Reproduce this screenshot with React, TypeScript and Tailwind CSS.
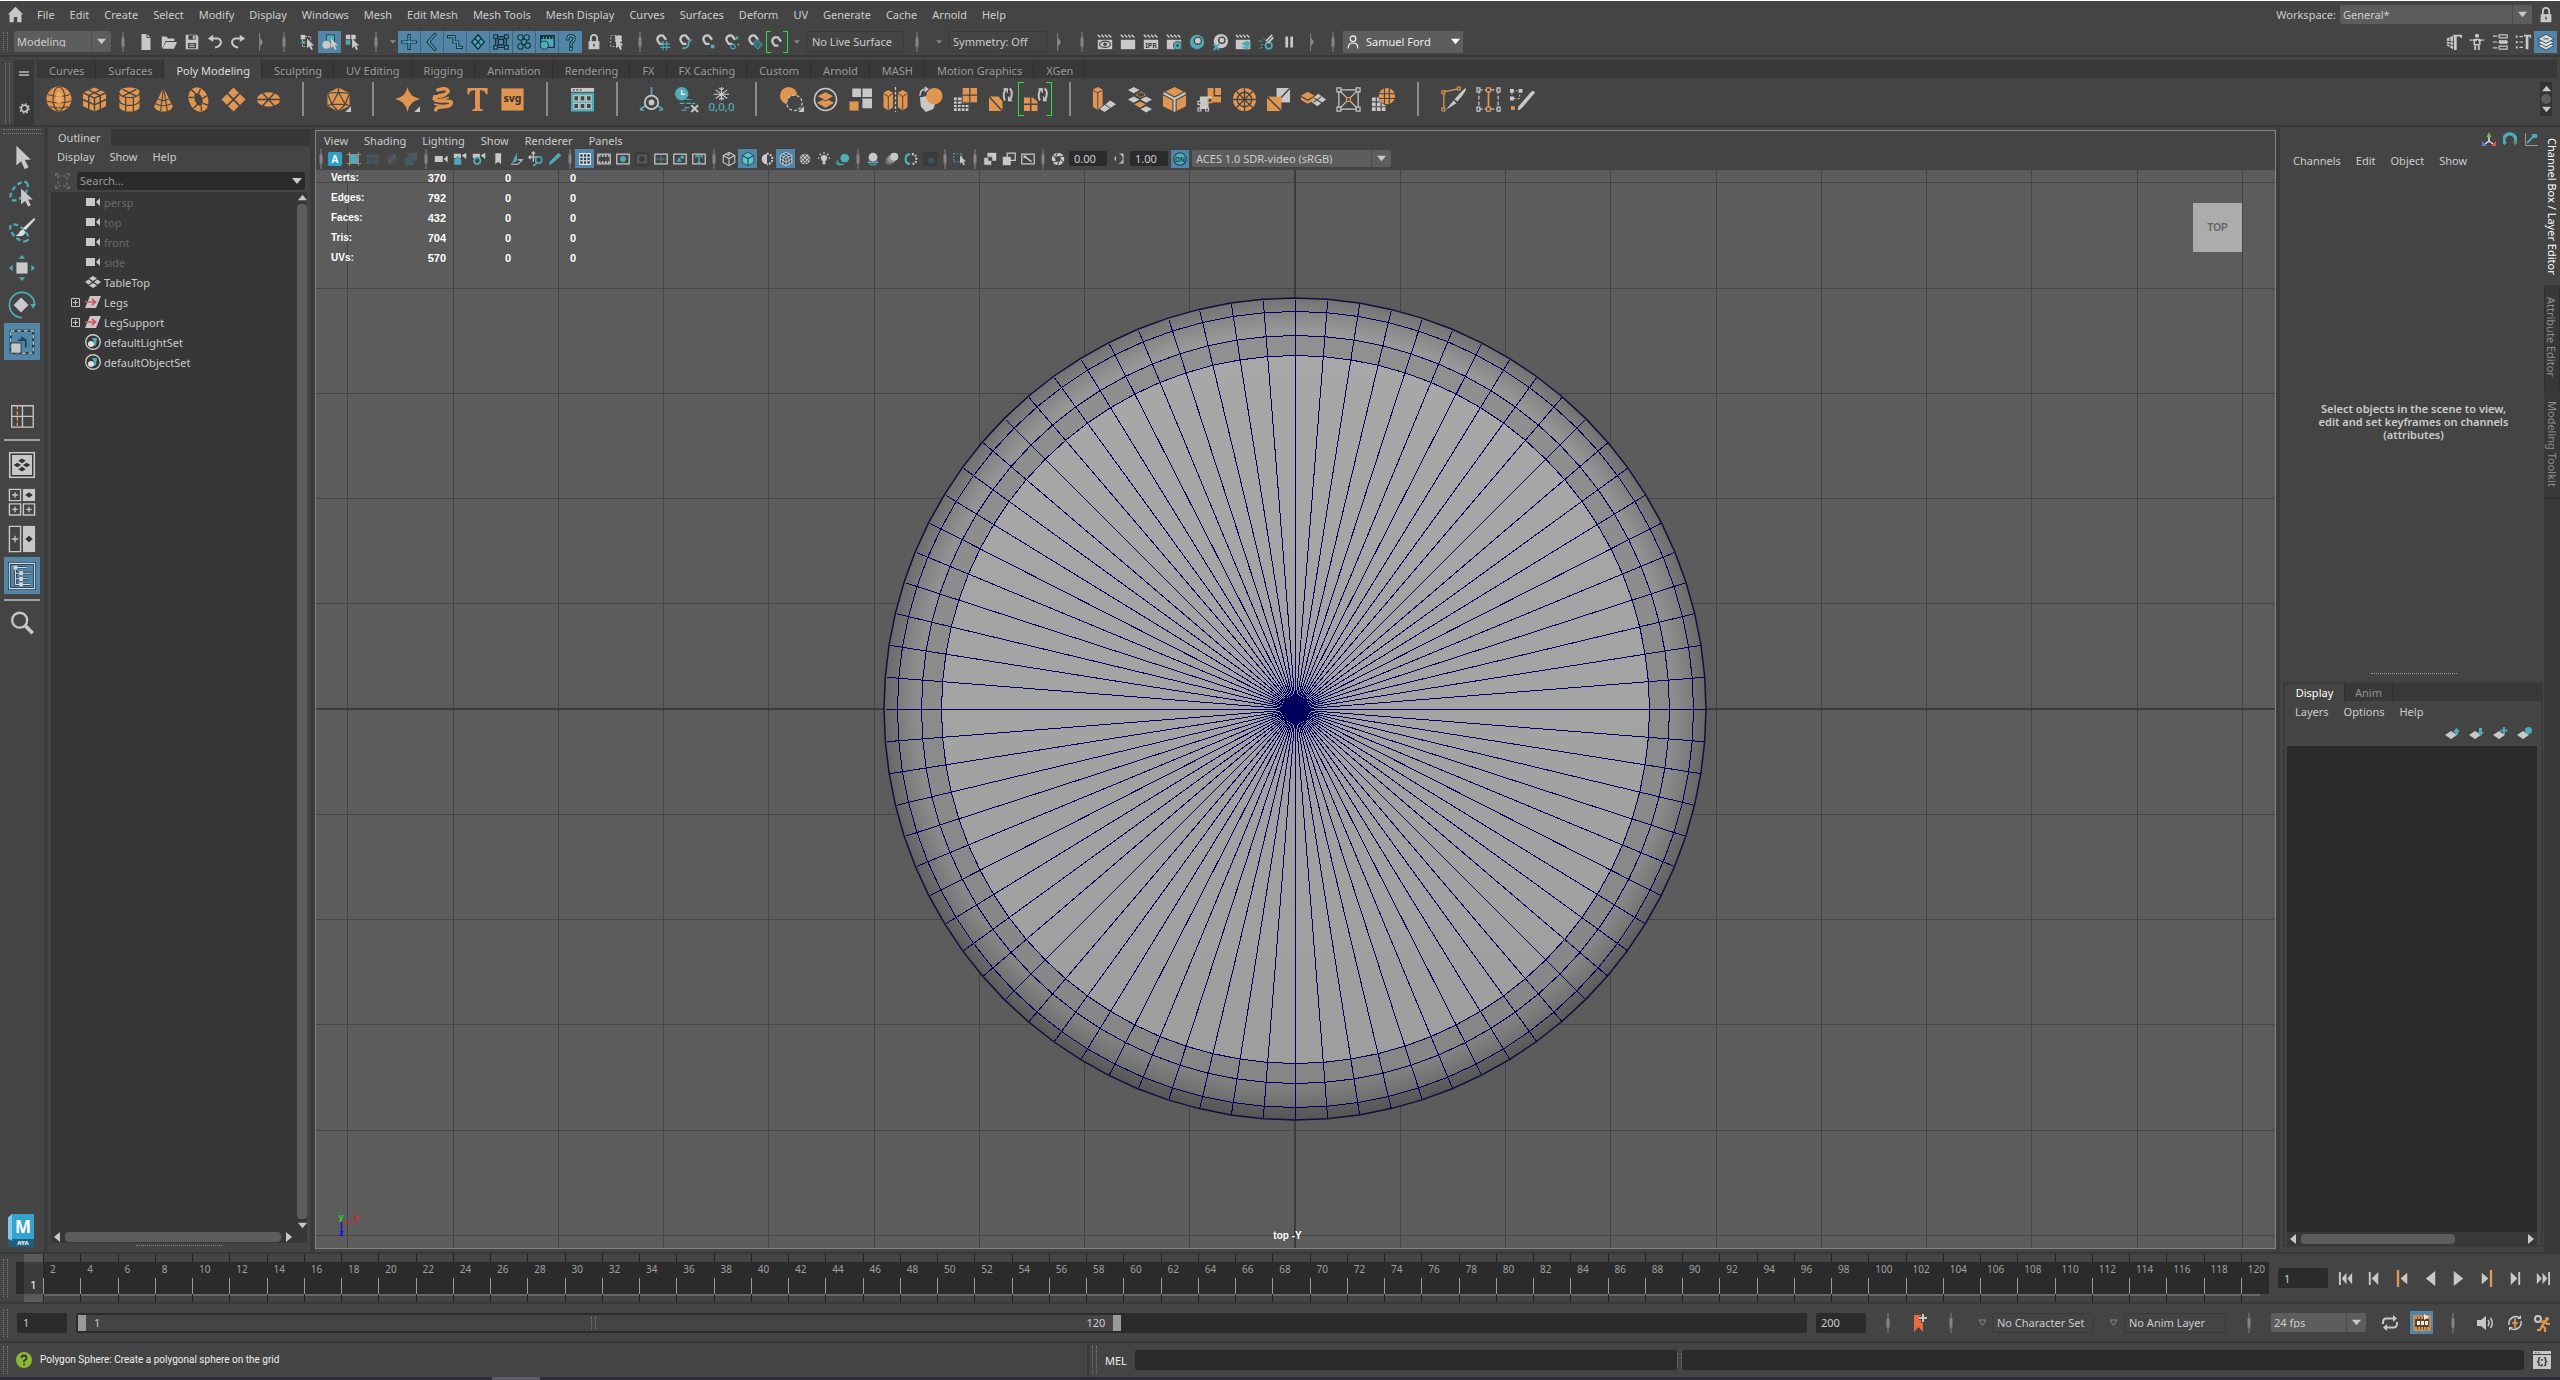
import React from "react";

const O = "#e09650";
const T = "#4dacb8";
const G = "#c8c8c8";
const D = "#444444";
const K = "#2b2b2b";

type IconMap = Record<string, React.ReactNode>;

/* ---------- shelf icons, 26 x 26 ---------- */
const swap = (
  <g fill="none" stroke={G} strokeWidth="2">
    <path d="M19 2c-3 2-3.500 8-1.500 12M22.500 1.500c3 2 3 8.500 0 12" />
    <path d="M16 2h4v4M25 14h-3.500v-4" strokeWidth="1.500" />
  </g>
);
const shelfIcons: IconMap = {
  sphere: (
    <g>
      <circle cx="13" cy="13" r="12.500" fill={O} />
      <g fill="none" stroke="#5a4632" strokeWidth="1.200">
        <ellipse cx="13" cy="13" rx="6" ry="12" />
        <path d="M2 8.500q11 4 22 0M1 15q12 4 24 0M4 20.500q9 3 18 0" />
      </g>
      <ellipse cx="13" cy="12" rx="3.500" ry="6" fill="#f4b57c" opacity=".7" />
    </g>
  ),
  cube: (
    <g>
      <path d="M13 .5 25 6v14l-12 5.500L1 20V6z" fill={O} />
      <path d="M1 6l12 5.500L25 6M13 11.500v14M7 3.200l12 5.500v14M19 3.200 7 8.700v14M1 13l12 5.500L25 13" fill="none" stroke={D} strokeWidth="1.500" />
    </g>
  ),
  cylinder: (
    <g>
      <path d="M2.500 5.500C2.500 2.500 7 .5 13 .5s10.500 2 10.500 5v15c0 3-4.500 5-10.500 5s-10.500-2-10.500-5z" fill={O} />
      <path d="M2.500 6c0 3 4.500 5 10.500 5s10.500-2 10.500-5M9 11v14M17 11v14M2.500 14c0 3 4.500 5 10.500 5s10.500-2 10.500-5M6 2.500l14 7M20 2.500l-14 7" fill="none" stroke={D} strokeWidth="1.300" />
    </g>
  ),
  cone: (
    <g>
      <path d="M13 .5 22.500 20c0 3-4 5.500-9.500 5.500S3.500 23 3.500 20z" fill={O} />
      <path d="M13 .5 10 25M13 .5 17 25M7.500 12.500q5.500 3.500 11 0M5 17.500q8 4 16 0" fill="none" stroke={D} strokeWidth="1.200" />
    </g>
  ),
  torus: (
    <g>
      <ellipse cx="13" cy="13" rx="7" ry="10" fill="none" stroke={O} strokeWidth="6" transform="rotate(-22 13 13)" />
      <path d="M5 2l5 5M15 2l-2 5M22 9l-5 3M23 19l-5-2M3 11l5 0M8 22l4-4M16 25l0-5" stroke={D} strokeWidth="1.500" />
    </g>
  ),
  plane: (
    <g>
      <path d="M13 .5 25.500 13 13 25.500.5 13z" fill={O} />
      <path d="M6.700 6.700l12.600 12.600M19.300 6.700 6.700 19.300" stroke={D} strokeWidth="1.800" />
    </g>
  ),
  disc: (
    <g>
      <ellipse cx="13" cy="13" rx="12" ry="7.500" fill={O} />
      <path d="M1 13h24M7 6.500l12 13M19 6.500 7 19.500" stroke={D} strokeWidth="1.500" />
    </g>
  ),
  platonic: (
    <g>
      <path d="M13 .5 24.500 6.500v13L13 25.500 1.500 19.500v-13z" fill={O} />
      <path d="M13 5.500 20 18H6zM13 .5v5M1.500 6.500 13 5.500l11.500 1M6 18 1.500 6.500M6 18l7 7.500L20 18l4.500-11.500M1.500 19.500 6 18M24.500 19.500 20 18" fill="none" stroke={D} strokeWidth="1.300" />
      <path d="M26 20v6h-6z" fill={G} />
    </g>
  ),
  star: (
    <g>
      <path d="M13 0q1.500 10 13 12.500Q14.500 15 13 26q-1.500-11-13-13.500Q11.500 10 13 0z" fill={O} />
      <path d="M26 20v6h-6z" fill={G} />
    </g>
  ),
  helix: (
    <g fill="none" strokeLinecap="round">
      <path d="M8 3q12-3 10 2T5 10q-3 5 8 4.500T22 17q0 3.500-8 3.500T6 24" stroke={O} strokeWidth="3.600" />
      <path d="M19 3q4 4-10 5M5 11q2 4 14 0M22 17q-4 4-17 1" stroke={O} strokeWidth="1.600" />
    </g>
  ),
  type: <path d="M2.500 1h21v6.500h-1.800q-.7-4-4.700-4h-1.500V21q0 2.300 3 2.500V25h-11v-1.500q3-.2 3-2.500V3.500H9q-4 0-4.700 4H2.500z" fill={O} />,
  svg: (
    <g>
      <rect x="1.500" y="1.500" width="23" height="23" fill={O} />
      <text x="13" y="16" textAnchor="middle" fontSize="11" fontWeight="700" fontFamily="Noto Sans, sans-serif" fill="#33302c">svg</text>
    </g>
  ),
  sheet: (
    <g>
      <rect x="1" y="1" width="24" height="4" fill={G} />
      <path d="M3 3h2M6.500 3h2M10 3h2" stroke={D} strokeWidth="1.500" />
      <rect x="1" y="6" width="24" height="19.500" fill={T} />
      <g fill={D} stroke={G} strokeWidth="1.200">
        <rect x="4" y="9" width="5" height="5.500" /><rect x="10.500" y="9" width="5" height="5.500" /><rect x="17" y="9" width="5" height="5.500" />
        <rect x="4" y="17" width="5" height="5.500" /><rect x="10.500" y="17" width="5" height="5.500" /><rect x="17" y="17" width="5" height="5.500" />
      </g>
    </g>
  ),
  pivot: (
    <g fill="none" strokeWidth="1.800">
      <path d="M13 0v9M8 19l-7 4M18 19l7 4M1 23l4 1.500M25 23l-4 1.500" stroke={T} />
      <circle cx="13" cy="16" r="7" stroke={G} />
      <circle cx="13" cy="16" r="3" fill={G} />
    </g>
  ),
  clock: (
    <g>
      <circle cx="8" cy="7" r="7" fill={T} />
      <path d="M8 3v4.500h4" fill="none" stroke="#e8e8e8" strokeWidth="1.600" />
      <path d="M12 13h7M13 17h9M6 17h5M11 21.500h5M8 24h5" stroke={T} strokeWidth="1.200" strokeDasharray="5 1" />
      <path d="M18 19l7 7M25 19l-7 7" stroke={G} strokeWidth="2" />
    </g>
  ),
  freeze: (
    <g>
      <path d="M13 0v14M7 3l12 9M19 3 7 12M5 7.500h16M10.500 1 13 3l2.500-2M10.500 13l2.500-2 2.500 2" fill="none" stroke={G} strokeWidth="1.200" />
      <text x="13" y="25" textAnchor="middle" fontSize="12" fontFamily="Noto Sans, sans-serif" fontWeight="500" fill={T}>0,0,0</text>
    </g>
  ),
  booleans: (
    <g>
      <circle cx="10" cy="9" r="9" fill={O} />
      <circle cx="16" cy="16.500" r="8" fill={D} stroke={G} strokeWidth="1.300" strokeDasharray="3 2" />
      <path d="M26 20v6h-6z" fill={G} />
    </g>
  ),
  combine: (
    <g>
      <circle cx="13" cy="13" r="11.500" fill="none" stroke={G} strokeWidth="1.600" />
      <path d="M13 12l9 4.500-9 5-9-5z" fill={O} /><path d="M13 5l9 4.500-9 5-9-5z" fill={O} stroke={D} />
    </g>
  ),
  separate: (
    <g>
      <path d="M4.500 1.500h9v9h-9zM15 1.500h10v9H15zM15 12h10v10H15z" fill={G} /><path d="M1.500 15h9.500v9.500H1.500z" fill={O} />
    </g>
  ),
  mirror: (
    <g>
      <path d="M5.500 3 10.500 6v15l-5 3.500L.5 21V6zM20.500 3l5 3v15l-5 3.500-5-3.500V6z" fill={O} />
      <path d="M.5 6.500 5.500 10l5-3.500M5.500 10v14M15.500 6.500l5 3.500 5-3.500M20.500 10v14" fill="none" stroke={D} />
      <path d="M13 0v26" stroke={G} strokeWidth="1.300" strokeDasharray="3 2" />
    </g>
  ),
  smooth: (
    <g>
      <path d="M2 11l8-2 9 5-3 9-8 3-5-6z" fill={G} /><circle cx="17" cy="9.500" r="8.500" fill={O} />
      <path d="M2 9q0-7 7-7M7 0l3 2-3 3" fill="none" stroke={G} strokeWidth="1.500" />
    </g>
  ),
  remesh: (
    <g>
      <path d="M10 1h15v15H10z" fill={O} /><path d="M17.500 1v15M10 8.500h15" stroke={D} strokeWidth="1.300" />
      <path d="M1 11h8v6.500h7V25H1z" fill={G} /><path d="M4.500 11v14M8.500 17v8M12.500 17v8M1 14.500h8M1 18h15M1 21.500h15" stroke={D} strokeWidth="1.200" />
    </g>
  ),
  retopo: (
    <g>
      <path d="M1 10h10l4 5v10H1z" fill={O} /><path d="M1 10l14 15" stroke={D} strokeWidth="1.500" />{swap}
    </g>
  ),
  quadMesh: (
    <g>
      <path d="M1 11h9l5 4v10H1z" fill={O} /><path d="M8 11v14M1 18h14" stroke={D} strokeWidth="1.500" />{swap}
    </g>
  ),
  extrude: (
    <g>
      <path d="M6 0l5 2.500v18L6 24l-5-3.500v-18z" fill={O} /><path d="M1 3.500 6 6l5-2.500M6 6v17" fill="none" stroke={D} />
      <path d="M19 14l6 4-12 8-6-4z" fill={G} /><path d="M13 18l6 4M16 16l-9 7" stroke={D} />
    </g>
  ),
  bridge: (
    <g>
      <path d="M7 0l6 3-6 3.500L1 3zM7 10l6 3-6 3.500L1 13zM20 10l6 3-6 3.500-6-3.500zM20 20l6 3-6 3.500-6-3.500z" fill={G} />
      <path d="M13.500 15l6 3-6 3.500-6-3.500z" fill={O} /><path d="M14.500 5l5 3-5 3-5-3z" fill="none" stroke={O} strokeDasharray="2 1" />
    </g>
  ),
  bevel: (
    <g>
      <path d="M13 0 25 6v14l-12 6L1 20V6z" fill={O} />
      <path d="M2 6.500l11 6 11-6M13 12.500V25" fill="none" stroke={D} strokeWidth="4.500" />
      <path d="M2 6.500l11 6 11-6M13 12.500V25" fill="none" stroke={G} strokeWidth="2.200" />
    </g>
  ),
  detach: (
    <g>
      <path d="M11 1h14v15H11z" fill={O} /><path d="M18 1v8h7" fill="none" stroke={D} strokeWidth="1.500" />
      <path d="M3 10h12v7h-3v6H3z" fill={G} />
      <g fill={D} stroke={G} strokeWidth="1.200"><path d="M1 15h3v3H1zM1 22h3v3H1zM9 22h3v3H9z" /><path d="M11.500 12h4v4h-4z" stroke={O} /></g>
    </g>
  ),
  wheel: (
    <g>
      <circle cx="13" cy="13" r="12" fill={O} />
      <path d="M13 1v24M1 13h24M4.500 4.500l17 17M21.500 4.500l-17 17" stroke={D} strokeWidth="1.400" /><circle cx="13" cy="13" r="7.500" fill="none" stroke={D} strokeWidth="1.400" />
    </g>
  ),
  triangulate: (
    <g>
      <path d="M11 1h14v15H11z" fill={G} /><path d="M25 1 11 16" stroke={D} strokeWidth="1.500" />
      <path d="M1 10h15v15H1z" fill={O} /><path d="M1 10l15 15" stroke={D} strokeWidth="1.500" />
    </g>
  ),
  patches: (
    <g>
      <path d="M18 7l8 6-9 7-8-6z" fill={G} /><path d="M13 11l9 6M21 10l-8 6" stroke={D} strokeWidth="1.200" />
      <path d="M7 5l7 4-7 4-7-4z" fill={O} /><path d="M0 10.500 7 14.500l7-4v3L7 17.500l-7-4z" fill={O} />
    </g>
  ),
  poke: (
    <g fill="none" strokeWidth="1.300">
      <path d="M3 3h20v20H3zM3 3l20 20M23 3 3 23" stroke={G} />
      <g fill={D} stroke={G}><path d="M1 1h4v4H1zM21 1h4v4h-4zM1 21h4v4H1zM21 21h4v4h-4z" /><path d="M11 11h4v4h-4z" stroke={O} /></g>
    </g>
  ),
  globe: (
    <g>
      <circle cx="16.500" cy="9.500" r="8.500" fill={O} /><path d="M8 7h17M8 12h17M14 1v17M19 1v17" stroke={D} strokeWidth="1.200" />
      <path d="M1 11h7q1 6 7 8v6H1z" fill={G} /><path d="M5.500 11v14M10.500 16v9M1 15.500h8M1 20.500h14" stroke={D} strokeWidth="1.200" />
    </g>
  ),
  cut: (
    <g>
      <path d="M3 23 3 5 18 2" fill="none" stroke={O} strokeWidth="1.300" />
      <g fill={D} stroke={O} strokeWidth="1.200"><path d="M1 4h3v3H1zM17 0h3v3h-3zM1 22h3v3H1z" /></g>
      <path d="M26 1q1 3-9 14l-3-2Q23 2 26 1zM13 14l3 3-11 7z" fill={G} />
    </g>
  ),
  edgeLoop: (
    <g fill="none" strokeWidth="1.300">
      <path d="M3 3h20M3 23h20M3 3v20M23 3v20" stroke={G} strokeDasharray="4 2" /><path d="M13 3v20" stroke={O} strokeWidth="1.800" />
      <g fill={D} stroke={G}><path d="M1 1h3v4H1zM22 1h3v4h-3zM1 21h3v4H1zM22 21h3v4h-3z" /><path d="M11 1h4v4h-4zM11 21h4v4h-4z" stroke={O} /></g>
    </g>
  ),
  quadDraw: (
    <g>
      <path d="M2 4h8v8H2z" fill="none" stroke={G} strokeDasharray="2 2" /><path d="M0 2h4v4H0zM9 2h4v4H9zM0 10h4v4H0z" fill={G} /><path d="M1 20h4v4H1z" fill={O} />
      <path d="M22 5q3-2 4 1L14 20l-4 4-2 0 1-4z" fill={G} />
    </g>
  ),
};

/* ---------- status line icons, 20 x 20 ---------- */
const cursor = (x: number, y: number, s = 1) => <path transform={`translate(${x} ${y}) scale(${s})`} d="M0 0v11l2.500-2.300 2 4.300 2-1-2-4H8z" fill={G} />;
const clap = (
  <g>
    <path d="M2 7.500h16V18H2z" fill={G} /><path d="M2 2l3 3M6 2l3 3M10 2l3 3M14 2l3 3" stroke={G} strokeWidth="1.700" />
  </g>
);
const magnet = <path d="M10.500 12 6.500 12Q3 8 4 5.500 6 1.500 10 3l3.500 4.500" fill="none" stroke={G} strokeWidth="2.600" />;
/* teal line with a dark casing, for the selection mask buttons */
const cased = (d: string) => (
  <g fill="none">
    <path d={d} stroke="#173140" strokeWidth="3.600" strokeLinecap="square" /><path d={d} stroke="#55b3bd" strokeWidth="1.400" strokeLinecap="square" />
  </g>
);
const smallIcons: IconMap = {
  file: <g><path d="M5 1h6l4 4v14H5z" fill={G} /><path d="M11 1v4h4" fill="none" stroke={D} /></g>,
  open: <g><path d="M2 4h5l2 2h7v3H6L4 15l-2 2z" fill={G} /><path d="M6.500 10H19l-3.500 7.500H3z" fill={G} /></g>,
  save: <g><path d="M3 2h12l2 2v14H3z" fill={G} /><path d="M6 2.500h8v5H6zM5.500 11h9v6h-9z" fill={D} /><path d="M11 3h2v4h-2z" fill={G} /><path d="M7 13h6M7 15h6" stroke={G} /></g>,
  undo: <g><path d="M6 6h7q4 1 3.500 5T10 16" fill="none" stroke={G} strokeWidth="2.200" /><path d="M2 6l6-4v8z" fill={G} /></g>,
  redo: <g><path d="M14 6H7q-4 1-3.500 5T10 16" fill="none" stroke={G} strokeWidth="2.200" /><path d="M18 6l-6-4v8z" fill={G} /></g>,
  end: <path d="M8 0h1v5l3 5-3 5v5H8z" fill="#8a8a8a" />,
  selHier: <g><path d="M3 2h5v5H3z" fill={G} /><path d="M8 4h6v4M5 7v8h3" fill="none" stroke={G} strokeDasharray="2 1" /><path d="M4 9h4v3H4z" fill={T} />{cursor(10, 6)}</g>,
  selObj: <g><path d="M6 2h9v8H6z" fill={T} stroke="#24424a" /><circle cx="6" cy="13" r="4.500" fill={G} />{cursor(11, 6)}</g>,
  selComp: <g><path d="M2 2h5v5H2zM8 2h5v5H8z" fill={G} /><path d="M2 8h5v5H2z" fill={T} />{cursor(9, 6)}</g>,
  mPlus: cased("M10 3v14M3 10h14"),
  mJoint: cased("M13 2 6 10l7 8"),
  mCurve: cased("M3 4h6v6h4v6h4"),
  mSurf: <path d="M10 2l7 8-7 8-7-8zM6.500 6l7 8M13.500 6l-7 8" fill={T} stroke="#173140" strokeWidth="1.500" />,
  mDeform: <g fill="none"><path d="M4 4h12v12H4zM7 7h6v6H7z" stroke="#173140" strokeWidth="1.600" /><path d="M2 2h4v4H2zM14 2h4v4h-4zM2 14h4v4H2zM14 14h4v4h-4z" fill={T} stroke="#173140" strokeWidth="1.400" /></g>,
  mDyn: <g fill="#4795a8" stroke="#173140" strokeWidth="1.200"><circle cx="6" cy="5" r="3" /><circle cx="13" cy="5" r="3" /><circle cx="10" cy="10" r="3" /><circle cx="6" cy="15" r="3" /><circle cx="14" cy="14" r="3" /></g>,
  mRend: <g><path d="M3 3h15v13H3z" fill={T} stroke="#173140" strokeWidth="1.500" /><path d="M3 5h15" stroke="#173140" strokeWidth="3.500" strokeDasharray="2.500 1" /><circle cx="7" cy="13.500" r="4.500" fill={T} stroke="#173140" /></g>,
  mMisc: <g>{cased("M6.500 6.500q0-3.500 3.500-3.500t3.500 3.500q0 2-2 3.200T10 13.500")}<path d="M8 15.500h4v4H8z" fill="#173140" /><path d="M9 16.500h2v2H9z" fill="#55b3bd" /></g>,
  lock: <g><path d="M4 9h12v9H4z" fill={G} /><path d="M6.500 9V6q0-4 3.500-4t3.500 4v3" fill="none" stroke={G} strokeWidth="2" /><path d="M9.200 12h1.600v3H9.200z" fill={D} /></g>,
  highlight: <g><path d="M3 3h12v12H3z" fill="none" stroke={G} strokeDasharray="2 2" /><path d="M8 3h7v7H8z" fill={G} />{cursor(9, 6)}</g>,
  snapGrid: <g>{magnet}<path d="M10 9v10M14 9v10M7 12h11M7 16h11" stroke={T} strokeWidth="1.300" /></g>,
  snapCurve: <g>{magnet}<path d="M6 17q8 0 7-7l3-3" fill="none" stroke={T} strokeWidth="2" /></g>,
  snapPoint: <g>{magnet}<path d="M12 13h4v4h-4z" fill={T} /></g>,
  snapProj: <g>{magnet}<circle cx="11" cy="15" r="2.500" fill="none" stroke={T} strokeWidth="1.300" /><path d="M14 4h3v3h-3zM16 12h2v2h-2z" fill={T} /></g>,
  snapPlane: <g>{magnet}<path d="M12 7l6 6-5 5-5-6z" fill="#326d76" stroke={T} /></g>,
  snapLive: <g transform="translate(1 2)">{magnet}</g>,
  rView: <g>{clap}<ellipse cx="10" cy="12.500" rx="6" ry="3.600" fill="none" stroke={D} strokeWidth="1.400" /><circle cx="10" cy="12.500" r="2" fill={D} /></g>,
  rFrame: clap,
  rIpr: <g>{clap}<text x="10" y="16.500" textAnchor="middle" fontSize="8" fontFamily="Noto Sans, sans-serif" fontWeight="600" fill={K}>IPR</text></g>,
  rSet: <g>{clap}<circle cx="14" cy="14" r="4.500" fill={T} stroke={D} /><circle cx="14" cy="14" r="1.500" fill={D} /></g>,
  rHyper: <g><circle cx="10" cy="10" r="8" fill={T} /><circle cx="11" cy="8.500" r="4" fill={G} stroke={D} strokeWidth="1.500" /></g>,
  rLook: <g><circle cx="11" cy="9" r="8" fill={G} /><circle cx="12" cy="8" r="3.500" fill={G} stroke={D} strokeWidth="1.500" /><path d="M3 12l6 7M9 12l-6 7" stroke={T} strokeWidth="2" /></g>,
  rLayers: <g>{clap}<path d="M14 9l5 3-5 3-5-3zM9 15l5 3 5-3" fill={T} stroke={T} /></g>,
  rLight: <g><circle cx="13" cy="14" r="3.500" fill="none" stroke={T} strokeWidth="2" /><path d="M10 9l7-7M12 11l6-6" stroke={G} strokeWidth="2" /><path d="M2 9h4M4 13h3M3 17l3-1M7 6l2 2" stroke={T} /></g>,
  pause: <path d="M6 4h3v12H6zM11.500 4h3v12h-3z" fill={G} />,
  user: <g fill="none" stroke="#e8e8e8" strokeWidth="1.600"><circle cx="10" cy="6" r="3.500" /><path d="M4 18q0-7 6-7t6 7" /></g>,
  home: <path d="M10 1 1 10h2v9h5v-6h4v6h5v-9h2z" fill={G} />,
  wModel: <g><path d="M2 6l7-3v15l-7-4z" fill={G} /><path d="M2 9l7 1M2 12l7 2M5.500 5v11" stroke={D} /><path d="M9 2h10v4l-3-2h-3v15h-3V5z" fill={G} /></g>,
  wHuman: <g><circle cx="10" cy="3" r="2.300" fill={G} /><path d="M2 8h16M7 8v4M13 8v4" stroke={G} strokeWidth="2" strokeDasharray="2 1" /><path d="M7 7h6v6H7z" fill="none" stroke={G} strokeWidth="1.500" /><path d="M8 14v5M12 14v5" stroke={G} strokeWidth="2" /></g>,
  wAttr: <g fill="none" stroke={G} strokeWidth="1.300"><path d="M9 2h9v3.500H9zM9 14.500h9V18H9zM2 3.500h5M2 10h5M2 16.500h5" /><path d="M9 8.500h9v3H9z" fill={G} strokeDasharray="2 1" /></g>,
  wTool: <g stroke={G}><path d="M2 4h2M2 10h2M2 16h2" strokeWidth="2.500" /><path d="M6 4h4M6 10h4M6 16h4" strokeWidth="1.200" /><path d="M11 2h8v4l-2-2h-1v14h-3V4h-2z" fill={G} stroke="none" /></g>,
  wLayers: <g fill="#dcdcdc" stroke="#27485c"><path d="M10 9l9 5-9 5-9-5z" /><path d="M10 5.500l9 5-9 5-9-5z" /><path d="M10 1.500l9 5-9 5-9-5z" /><path d="M7 6.500h6" /></g>,
};

/* ---------- viewport bar icons, 18 x 18 ---------- */
const box = <path d="M2 3.500h14v11H2z" fill="none" stroke={G} strokeWidth="1.400" />;
const panelIcons: IconMap = {
  a: <g><rect x="1" y="1" width="16" height="16" rx="2" fill="#2f9fc8" /><text x="9" y="13" textAnchor="middle" fontSize="11" fontWeight="700" fontFamily="Noto Sans, sans-serif" fill="#fff">A</text></g>,
  bake: <g><path d="M4 4h10v10H4z" fill={T} /><path d="M4 1v16M14 1v16M1 4h16M1 14h16" stroke="#9a8a80" strokeWidth="1.200" /></g>,
  dim1: <path d="M2 4h14v4H2zM2 9h6v6H2zM9 9h7v6H9z" fill="#47545c" />,
  dim2: <g><circle cx="9" cy="9" r="6" fill="#57494c" /><path d="M13 4 5 14" stroke="#47606a" strokeWidth="3" /></g>,
  dim3: <g><path d="M6 2h10v9H6z" fill="#4d5a60" /><path d="M2 7h10v9H2z" fill="#445a63" /></g>,
  cam: <g><path d="M2 5.500h9v7H2zM12 9l4.500-4v8z" fill={G} /></g>,
  camLock: <g><path d="M2 3h8v5H2zM11 5l5-3v7z" fill={G} /><path d="M3 9h7v6H3zM4.500 9q0-3 2-3t2 3" fill={T} stroke={T} /></g>,
  camSet: <g><path d="M2 3h8v5H2zM11 5l5-3v7z" fill={G} /><circle cx="7" cy="11" r="3.500" fill={D} stroke={T} strokeWidth="2" /></g>,
  bookmark: <path d="M6 2.500h6.500V15L9.200 12 6 15z" fill={G} />,
  plane2: <g><path d="M9 2v9l-6 3z" fill={T} /><path d="M2 15h8l5-5h-5" fill="none" stroke={G} strokeWidth="1.200" /></g>,
  panZoom: <g fill="none"><path d="M6 1v11M1 7h11M4 3l2-2 2 2M3 5 1 7l2 2" stroke={G} strokeWidth="1.400" /><circle cx="12" cy="10" r="3.500" fill={D} stroke={T} strokeWidth="1.700" /><path d="M10 13l-4 4" stroke={T} strokeWidth="2" /></g>,
  pencil: <path d="M13 2l3 3L6 14l-4 2 1-4z" fill={T} />,
  grid: <g><path d="M3 3h12v12H3z" fill="#2c4353" /><path d="M3 3h12v12H3zM3 7h12M3 11h12M7 3v12M11 3v12" fill="none" stroke="#dfe6ea" strokeWidth="1.300" /></g>,
  film: <g>{box}<path d="M3 5.500h12M3 12.500h12" stroke={G} strokeWidth="2" strokeDasharray="2 1.500" /></g>,
  gate: <g>{box}<circle cx="9" cy="9" r="3.300" fill={T} /></g>,
  dimGate: <g><path d="M1 1h16v16H1z" fill="#3c3c3c" /><path d="M3 4h12v10H3z" fill="#575757" /><circle cx="9" cy="9" r="3" fill="#3c3c3c" /></g>,
  chart: <g>{box}<path d="M2 9h14M9 3.500v11" stroke={T} strokeDasharray="2 1" /></g>,
  safe: <g>{box}<path d="M5 12l3-5 3 5z" fill={T} /><circle cx="11.500" cy="7" r="2" fill={T} /></g>,
  title: <g>{box}<path d="M5.500 5.500h7v2M5.500 5.500v2M9 5.500V13M7.500 13h3" fill="none" stroke={T} strokeWidth="1.600" /></g>,
  wire: <path d="M9 1.500 15.500 5v8L9 16.500 2.500 13V5zM2.500 5 9 8.500 15.500 5M9 8.500v8M5.500 3.500 9 5M9 1.500V5" fill="none" stroke={G} strokeWidth="1.200" />,
  shaded: <g><path d="M9 1.500 15.500 5v8L9 16.500 2.500 13V5z" fill="#5fc4ce" stroke="#1f4a58" /><path d="M2.500 5 9 8.500 15.500 5M9 8.500v8" fill="none" stroke="#1f4a58" strokeWidth="1.300" /></g>,
  halfMat: <g><path d="M9 3v12a6 6 0 0 1 0-12z" fill={G} /><path d="M9 3a6 6 0 0 1 0 12" fill="none" stroke={G} strokeWidth="2.500" strokeDasharray="2 1.500" /></g>,
  wireShade: <g><path d="M9 1.500 15.500 5v8L9 16.500 2.500 13V5z" fill="#2c4353" /><path d="M9 1.500 15.500 5v8L9 16.500 2.500 13V5zM2.500 5 9 8.500 15.500 5M9 8.500v8M5.700 7v8M12.300 7v8M2.500 9 9 12.500 15.500 9M5.700 3.300l6.600 3.500M12.300 3.300 5.700 6.800" fill="none" stroke="#d5e0e6" strokeWidth="1" /></g>,
  tex: <g><circle cx="9" cy="9" r="6" fill={G} /><path d="M4 5l9 9M7 3l8 8M3 8l7 7M14 5l-9 9M11 3 3 11M15 8l-7 7" stroke="#4a4a4a" strokeWidth="1.100" /></g>,
  bulb: <g><circle cx="9" cy="8" r="3.500" fill={G} /><path d="M7.500 11h3v4h-3z" fill={G} /><path d="M9 1v2M2 8h2M14 8h2M4 3l1.500 1.500M14 3l-1.500 1.500" stroke={G} strokeWidth="1.500" /></g>,
  shadow: <g><circle cx="11" cy="8" r="5" fill={T} /><path d="M2 10q2 6 8 5M1 13q2 3 5 3" fill="none" stroke={T} strokeWidth="1.300" /></g>,
  ao: <g><circle cx="9" cy="7" r="5" fill={G} /><path d="M3 13h12M5 15.500h8M4 11l3 3M14 11l-3 3" stroke={T} strokeWidth="1.300" /></g>,
  blur: <g><circle cx="6" cy="11" r="4.500" fill="#707070" /><circle cx="8.500" cy="9" r="4.500" fill="#929292" /><circle cx="11.500" cy="6.500" r="4.500" fill={G} /></g>,
  aa: <g fill="none" strokeWidth="2.500"><path d="M8 3.500q-5 0-5 5.500t5 5.500" stroke={T} /><path d="M10 3.500q5 0 5 5.500t-5 5.500" stroke={G} strokeDasharray="2 1.500" /></g>,
  dof: <g><path d="M1 1h16v16H1z" fill="#3a3a3a" /><path d="M7 8h7v6H7z" fill="#35565b" /></g>,
  isolate: <g><path d="M2 3h9v9H2z" fill="none" stroke={T} strokeWidth="1.200" strokeDasharray="2 1.500" />{cursor(9, 5, 0.850)}</g>,
  xray: <g><path d="M6 2h10v9H6z" fill={G} /><path d="M2 7h9v9H2z" fill={G} stroke={D} /><path d="M7 7.500h4v3.500H7z" fill={D} /></g>,
  xray2: <g><path d="M7 2.500h9v8H7z" fill="none" stroke={G} strokeWidth="1.400" /><path d="M2 6.500h9V16H2z" fill={G} /></g>,
  joint: <g>{box}<path d="M5 6l8 6" stroke={G} strokeWidth="1.600" /><path d="M4 5h3v3H4z" fill={G} /></g>,
  aperture: <g><circle cx="9" cy="9" r="5" fill="none" stroke={G} strokeWidth="4" /><path d="M9 1l-3 6M16 6l-7 .5M15 13l-4-5M8 17l2.500-6M2 12l6 0M3 4l3.500 5" stroke={D} strokeWidth="1.100" /></g>,
  gamma: <g><path d="M8 3h7v12H8a6 6 0 0 0 0-12z" fill={G} /><path d="M6 6v6a3.500 3.500 0 0 1 0-6z" fill={G} /></g>,
  on: <g><circle cx="9" cy="9" r="7" fill={T} stroke="#1d4350" strokeWidth="1.300" /><text x="9" y="12" textAnchor="middle" fontSize="7" fontWeight="700" fontFamily="Noto Sans, sans-serif" fill="#1d4350">ON</text></g>,
};

function Svg({ n, map, vb, size }: { n: string; map: IconMap; vb: number; size: number }) {
  return (
    <svg width={size} height={size} viewBox={`0 0 ${vb} ${vb}`} aria-hidden="true" className="shrink-0 overflow-visible">
      {map[n]}
    </svg>
  );
}

const Down = ({ s = 9, c = "#c8c8c8" }: { s?: number; c?: string }) => (
  <svg width={s} height={s} viewBox="0 0 10 10" aria-hidden="true" className="shrink-0"><path d="M0 2h10L5 8z" fill={c} /></svg>
);

function Sep({ className }: { className: string }) {
  return (
    <span className={`flex shrink-0 items-center justify-center ${className}`}>
      <svg width="4" height="20" viewBox="0 0 4 20" aria-hidden="true"><path d="M1.500 0h1v5l1 1v8l-1 1v5h-1v-5l-1-1V6l1-1z" fill="#858585" /></svg>
    </span>
  );
}

function StatusBtn({ n, on }: { n: string; on?: boolean }) {
  return (
    <button aria-label={n} className={`flex h-[22px] w-[23px] shrink-0 items-center justify-center ${on ? "bg-[#5285a6]" : ""}`}>
      <Svg n={n} map={smallIcons} vb={20} size={18} />
    </button>
  );
}

function Menus({ items, className, label }: { items: string[]; className: string; label: string }) {
  return (
    <nav aria-label={label} className={`flex items-center whitespace-nowrap ${className}`}>
      {items.map((m) => <button key={m}>{m}</button>)}
    </nav>
  );
}

function Select({ label, value, options = [], className }: { label: string; value: string; options?: string[]; className: string }) {
  return (
    <div className={`relative flex shrink-0 items-center rounded-[2px] bg-[#5d5d5d] ${className}`}>
      <select aria-label={label} defaultValue={value} className="h-full w-full appearance-none bg-transparent outline-none">
        <option>{value}</option>
        {options.map((o) => <option key={o}>{o}</option>)}
      </select>
      <span className="pointer-events-none absolute inset-y-0 right-0 flex w-[20px] items-center justify-center border-l border-[#4c4c4c]"><Down /></span>
    </div>
  );
}

const Grip = ({ className }: { className: string }) => <span className={`w-[5px] shrink-0 border-x border-dotted border-[#7a7a7a] ${className}`} />;

const mainMenu = ["File", "Edit", "Create", "Select", "Modify", "Display", "Windows", "Mesh", "Edit Mesh", "Mesh Tools", "Mesh Display", "Curves", "Surfaces", "Deform", "UV", "Generate", "Cache", "Arnold", "Help"];
const shelfTabs = ["Curves", "Surfaces", "Poly Modeling", "Sculpting", "UV Editing", "Rigging", "Animation", "Rendering", "FX", "FX Caching", "Custom", "Arnold", "MASH", "Motion Graphics", "XGen"];
const shelf = ["sphere", "cube", "cylinder", "cone", "torus", "plane", "disc", "|", "platonic", "|", "star", "helix", "type", "svg", "|", "sheet", "|", "pivot", "clock", "freeze", "|", "booleans", "combine", "separate", "mirror", "smooth", "remesh", "retopo", "quadMesh", "|", "extrude", "bridge", "bevel", "detach", "wheel", "triangulate", "patches", "poke", "globe", "|", "cut", "edgeLoop", "quadDraw"];
const panelBar = ["a", "bake", "dim1", "dim2", "dim3", "|", "cam", "camLock", "camSet", "bookmark", "plane2", "panZoom", "pencil", "|", "grid", "film", "gate", "dimGate", "chart", "safe", "title", "|", "wire", "shaded", "halfMat", "wireShade", "tex", "bulb", "shadow", "|", "ao", "blur", "aa", "dof", "|", "isolate", "|", "xray", "xray2", "joint", "|", "aperture"];
const panelOn = ["grid", "shaded", "wireShade"];

function Header() {
  return (
    <header className="shrink-0 border-t border-white">
      <div className="flex h-[27px] items-center pr-[5px] pl-[7px]">
        <button aria-label="Home"><Svg n="home" map={smallIcons} vb={20} size={17} /></button>
        <Menus label="Main menu" items={mainMenu} className="ml-[13px] gap-[15px]" />
        <label className="mr-1 ml-auto" htmlFor="ws">Workspace:</label>
        <div className="relative h-[19px] w-[192px] rounded-[2px] bg-[#5d5d5d]">
          <select id="ws" className="h-full w-full appearance-none bg-transparent pl-[3px] outline-none"><option>General*</option></select>
          <span className="pointer-events-none absolute inset-y-0 right-0 flex w-[20px] items-center justify-center border-l border-[#4c4c4c]"><Down /></span>
        </div>
        <button aria-label="Lock workspace" className="ml-[5px]"><Svg n="lock" map={smallIcons} vb={20} size={18} /></button>
      </div>
      <div className="flex h-[27px] items-center pr-[3px] pl-[3px]">
        <Grip className="mr-[6px] h-[20px]" />
        <Select label="Menu set" value="Modeling" options={["Rigging", "Animation", "FX", "Rendering"]} className="h-[21px] w-[97px] pl-[3px]" />
        <Sep className="w-[23px]" />
        {["file", "open", "save", "undo", "redo", "end"].map((n) => <StatusBtn key={n} n={n} />)}
        <Sep className="w-[23px]" />
        <StatusBtn n="selHier" /><StatusBtn n="selObj" on /><StatusBtn n="selComp" />
        <Sep className="w-[23px]" />
        <span className="flex w-[11px] justify-center"><Down s={6} c="#8a8a8a" /></span>
        <div className="flex divide-x divide-[#3f6680]">
          {["mPlus", "mJoint", "mCurve", "mSurf", "mDeform", "mDyn", "mRend", "mMisc"].map((n) => <StatusBtn key={n} n={n} on />)}
        </div>
        <StatusBtn n="lock" /><StatusBtn n="highlight" />
        <Sep className="w-[23px]" />
        {["snapGrid", "snapCurve", "snapPoint", "snapProj", "snapPlane"].map((n) => <StatusBtn key={n} n={n} />)}
        <button aria-label="Make live" className="relative flex h-[22px] w-[22px] items-center justify-center">
          <Svg n="snapLive" map={smallIcons} vb={20} size={18} />
          <span className="absolute inset-y-0 left-0 w-[5px] border border-r-0 border-[#2fe03a]" />
          <span className="absolute inset-y-0 right-0 w-[5px] border border-l-0 border-[#2fe03a]" />
        </button>
        <span className="flex w-[18px] justify-center"><Down s={6} c="#8a8a8a" /></span>
        <input aria-label="Live surface" readOnly value="No Live Surface" className="h-[21px] w-[98px] rounded-[2px] border border-[#3a3a3a] bg-transparent px-[5px]" />
        <Sep className="w-[26px]" />
        <span className="flex w-[18px] justify-center"><Down s={6} c="#8a8a8a" /></span>
        <input aria-label="Symmetry" readOnly value="Symmetry: Off" className="h-[21px] w-[99px] rounded-[2px] border border-[#3a3a3a] bg-transparent px-1" />
        <StatusBtn n="end" />
        <Sep className="w-[23px]" />
        {["rView", "rFrame", "rIpr", "rSet", "rHyper", "rLook", "rLayers", "rLight", "pause", "end"].map((n) => <StatusBtn key={n} n={n} />)}
        <Sep className="w-[20px]" />
        <div className="relative flex h-[22px] w-[120px] items-center bg-[#5d5d5d] pl-[2px] text-[#eeeeee]">
          <Svg n="user" map={smallIcons} vb={20} size={16} />
          <select aria-label="Account" className="h-full flex-1 appearance-none bg-transparent pl-[5px] outline-none"><option>Samuel Ford</option></select>
          <span className="pointer-events-none absolute inset-y-0 right-[3px] flex items-center"><Down s={9} c="#ffffff" /></span>
        </div>
        <div className="ml-auto flex">
          {["wModel", "wHuman", "wAttr", "wTool"].map((n) => <StatusBtn key={n} n={n} />)}
          <StatusBtn n="wLayers" on />
        </div>
      </div>
    </header>
  );
}

function Shelf() {
  return (
    <section aria-label="Shelf" className="flex h-[72px] shrink-0 border-t-2 border-b-2 border-[#373737] pt-[3px] pr-[3px]">
      <div className="flex w-[14px] items-center justify-center"><Grip className="h-[60px]" /></div>
      <div className="flex w-[20px] shrink-0 flex-col items-center justify-between bg-[#383838] pt-[11px] pb-[11px]">
        <button aria-label="Shelf menu" className="h-[5px] w-[10px] border-y-2 border-[#9a9a9a]" />
        <button aria-label="Shelf settings">
          <svg width="11" height="11" viewBox="0 0 12 12"><circle cx="6" cy="6" r="3.500" fill="none" stroke={G} strokeWidth="1.800" /><circle cx="6" cy="6" r="5" fill="none" stroke={G} strokeWidth="1.500" strokeDasharray="2 1.900" /></svg>
        </button>
      </div>
      <div className="flex min-w-0 flex-1 flex-col pl-[3px]">
        <div role="tablist" className="flex h-[18px] shrink-0 bg-[#383838]">
          {shelfTabs.map((t) => (
            <button key={t} role="tab" aria-selected={t === "Poly Modeling"} className={`border-r border-[#2f2f2f] pt-[3px] pr-[11px] pl-3 whitespace-nowrap ${t === "Poly Modeling" ? "bg-[#444444] text-[#dddddd]" : "text-[#9a9a9a]"}`}>{t}</button>
          ))}
        </div>
        <div className="flex flex-1 items-center pb-[5px]">
          <div className="flex h-[34px] w-[1503px] items-center pl-[5px]">
            {shelf.map((n, i) => n === "|" ? (
              <span key={i} className="flex flex-1 justify-center"><span className="h-[34px] w-[2px] bg-[#8c8c8c]" /></span>
            ) : (
              <button key={i} aria-label={n} className="relative flex h-[34px] flex-1 items-center justify-center">
                <Svg n={n} map={shelfIcons} vb={26} size={n === "sphere" ? 26 : 25} />
                {n === "quadMesh" && (
                  <>
                    <span className="absolute inset-y-0 left-0 w-[6px] border border-r-0 border-[#2fe03a]" />
                    <span className="absolute inset-y-0 right-0 w-[6px] border border-l-0 border-[#2fe03a]" />
                  </>
                )}
              </button>
            ))}
          </div>
          <div className="mr-[5px] ml-auto flex h-[34px] w-[12px] flex-col items-center justify-between bg-[#333333] py-[2px]">
            <span className="rotate-180"><Down /></span><span className="size-[10px] rounded-full bg-[#5d5d5d]" /><Down />
          </div>
        </div>
      </div>
    </section>
  );
}

const toolIcons: IconMap = {
  select: <path d="M9 3v21l5-4.500 4 8.500 4-2-4-8h6.500z" fill={G} />,
  lasso: <g><ellipse cx="12" cy="12" rx="12" ry="6.500" transform="rotate(-48 12 12)" fill="none" stroke={T} strokeWidth="2.400" strokeDasharray="5 3" /><path d="M14 9v17l4.500-3.500 3 6 3-1.500-3-6h5z" fill={G} /></g>,
  paint: <g><ellipse cx="12" cy="17" rx="12" ry="6" transform="rotate(42 12 17)" fill="none" stroke={T} strokeWidth="2.400" strokeDasharray="5 3" /><path d="M28 1q2 1 0 3l-9 10-3-2zM16 13l3 3q-2 6-11 4 4-2 5-5z" fill="#dcdcdc" /></g>,
  move: <g><path d="M9 9h12v12H9z" fill={G} /><path d="M15 1l3.500 4h-7zM15 29l3.500-4h-7zM1 15l4-3.500v7zM29 15l-4-3.500v7z" fill={T} /></g>,
  rotate: <g><path d="M15 28.500A13.500 13.500 0 1 1 28.500 15" fill="none" stroke={T} strokeWidth="1.800" /><path d="M24 14h6l-3 5z" fill={T} /><path d="M14 7l8 8-8 8-8-8z" fill={G} /></g>,
  scale: <g><path d="M3 3h24v24H3z" fill="none" stroke="#1e3d50" strokeWidth="2.500" /><path d="M3 3h24v24H3z" fill="none" stroke="#d8d8d8" strokeWidth="1.300" strokeDasharray="4 3" /><path d="M3 16h11v11H3z" fill={G} stroke="#1e3d50" /><path d="M11 13h8v8M14 10l5 3" fill="none" stroke="#1e3d50" strokeWidth="1.800" /></g>,
  last: <g fill="none" stroke={G} strokeWidth="1.400"><path d="M4 4h23v23H4zM15.500 4v23M4 15.500h23" /><path d="M10 4v23" stroke={O} strokeDasharray="4 2" /></g>,
  single: <g><path d="M1 1h28v28H1z" fill={G} /><path d="M3.500 3.500h23v23h-23z" fill="none" stroke="#333" strokeWidth="1.500" /><path d="M15 8l4 2.500-4 2.500-4-2.500zM15 17l4 2.500-4 2.500-4-2.500zM10 12.500l4 2.500-4 2.500L6 15zM20 12.500l4 2.500-4 2.500-4-2.500z" fill="#333" /></g>,
  four: <g><path d="M1.500 1.500h12v12h-12zM1.500 17h12v12h-12zM16.500 17h12v12h-12z" fill="none" stroke={G} strokeWidth="1.500" /><path d="M16 1h13v13H16z" fill={G} /><path d="M7.500 4.500v6M4.500 7.500h6M7.500 20v6M4.500 23h6M22.500 20v6M19.500 23h6" stroke={G} strokeWidth="1.400" /><path d="M22.500 4.500l4 3-4 3-4-3z" fill="#333" /></g>,
  two: <g><path d="M1.500 1.500h12v27h-12z" fill="none" stroke={G} strokeWidth="1.500" /><path d="M16 1h13v28H16z" fill={G} /><path d="M7.500 11.500v7M4 15h7" stroke={G} strokeWidth="1.400" /><path d="M22.500 11.500l4 3.500-4 3.500-4-3.500z" fill="#333" /></g>,
  tree: <g fill="none"><path d="M1.500 1.500h27v27h-27z" stroke="#1e3d50" strokeWidth="3" /><path d="M1.500 1.500h27v27h-27z" stroke="#d8d8d8" strokeWidth="1.200" /><path d="M8 8v16h5M8 12h5M8 18h5M9 6h11M16 12h9M16 18h6M16 24h8" stroke="#1e3d50" strokeWidth="3" /><path d="M8 8v16h5M8 12h5M8 18h5M9 6h11M16 12h9M16 18h6M16 24h8" stroke="#d8d8d8" strokeWidth="1.200" /><path d="M6 4h4v4H6zM12 10h4v4h-4zM12 16h4v4h-4zM12 22h4v4h-4z" fill="#d8d8d8" /></g>,
  search: <g fill="none" stroke={G}><circle cx="12.500" cy="12" r="8" strokeWidth="2.500" /><path d="M18.500 18l8 8" strokeWidth="4" /></g>,
};

function Tool({ n, on }: { n: string; on?: boolean }) {
  return (
    <button aria-label={n} className={`flex h-[37px] w-[36px] shrink-0 items-center justify-center ${on ? "bg-[#5285a6]" : ""}`}>
      <Svg n={n} map={toolIcons} vb={30} size={28} />
    </button>
  );
}

function ToolBox() {
  return (
    <aside aria-label="Tool box" className="flex w-[44px] shrink-0 flex-col items-center pt-[2px] pb-[5px]">
      <span className="mb-[4px] h-[5px] w-[38px] border-y border-dotted border-[#7a7a7a]" />
      <Tool n="select" /><Tool n="lasso" /><Tool n="paint" /><Tool n="move" /><Tool n="rotate" /><Tool n="scale" on />
      <span className="h-[37px]" />
      <Tool n="last" />
      <span className="my-[5px] h-[2px] w-[36px] bg-[#a0a0a0]" />
      <Tool n="single" /><Tool n="four" /><Tool n="two" /><Tool n="tree" on />
      <span className="mt-[5px] mb-[3px] h-[2px] w-[36px] bg-[#a0a0a0]" />
      <Tool n="search" />
      <svg width="30" height="33" viewBox="0 0 30 33" className="mt-auto" aria-label="Maya">
        <path d="M1 3.500 5 0v27l-4-2z" fill="#7cc8e6" /><path d="M5 0h22v27H5z" fill="#35a2cf" /><path d="M1 25l4 2v6H1zM5 25h22v8H5z" fill="#1f5f7d" />
        <text x="16" y="19" textAnchor="middle" fontSize="17" fontWeight="700" fontFamily="Noto Sans, sans-serif" fill="#fff">M</text>
        <text x="16" y="31" textAnchor="middle" fontSize="6" fontWeight="700" fontFamily="Noto Sans, sans-serif" fill="#fff">AYA</text>
      </svg>
    </aside>
  );
}

const nodeIcons: IconMap = {
  cam: <path d="M1 4h9v8H1zM11 8l4-4v8z" fill={G} />,
  mesh: <path d="M8 2l4 2.500L8 7 4 4.500zM8 9l4 2.500L8 14l-4-2.500zM3.500 5.500 7 8l-3.500 2.500L0 8zM12.500 5.500 16 8l-3.500 2.500L9 8z" fill={G} />,
  group: <g><path d="M5 2h11l-5 12H0z" fill={G} /><path d="M0 8h10M7 5l3.500 3L7 11" fill="none" stroke="#d2545e" strokeWidth="1.700" /></g>,
  set: <g><circle cx="8" cy="8" r="7.300" fill="none" stroke={G} strokeWidth="1.400" /><path d="M7 4h5l-1 7-2 1V8z" fill={T} /><circle cx="6" cy="10" r="3" fill="#e0e0e0" /></g>,
};
const nodes = [
  { t: "persp", i: "cam", dim: true }, { t: "top", i: "cam", dim: true }, { t: "front", i: "cam", dim: true }, { t: "side", i: "cam", dim: true },
  { t: "TableTop", i: "mesh" }, { t: "Legs", i: "group", ex: true }, { t: "LegSupport", i: "group", ex: true },
  { t: "defaultLightSet", i: "set" }, { t: "defaultObjectSet", i: "set" },
];

const Left = () => <svg width="6" height="10" viewBox="0 0 6 10" aria-hidden="true"><path d="M6 0v10L0 5z" fill={G} /></svg>;
const Right = () => <svg width="6" height="10" viewBox="0 0 6 10" aria-hidden="true"><path d="M0 0v10l6-5z" fill={G} /></svg>;

function Outliner() {
  return (
    <aside aria-label="Outliner" className="flex w-[262px] shrink-0 flex-col pt-[2px]">
      <div className="flex h-[17px] shrink-0 bg-[#373737]"><button className="bg-[#444444] px-[10px]">Outliner</button></div>
      <Menus label="Outliner menu" items={["Display", "Show", "Help"]} className="h-[20px] shrink-0 gap-[15px] pl-[9px]" />
      <div className="flex h-[26px] shrink-0 items-center pt-[3px] pr-[5px] pl-[7px]">
        <svg width="15" height="16" viewBox="0 0 15 16" aria-hidden="true"><path d="M3 3h9v10H3z" fill="none" stroke="#777" strokeDasharray="3 2" /><path d="M0 0h4L0 4zM15 0h-4l4 4zM0 16h4l-4-4zM15 16h-4l4-4z" fill="#6a6a6a" /></svg>
        <div className="ml-[7px] flex h-[18px] flex-1 items-center rounded-[2px] bg-[#2b2b2b] px-[3px]">
          <input aria-label="Search" placeholder="Search..." className="min-w-0 flex-1 bg-transparent outline-none placeholder:text-[#9a9a9a]" /><Down s={10} />
        </div>
      </div>
      <div className="mx-[3px] flex min-h-0 flex-1 bg-[#373737]">
        <div className="flex min-w-0 flex-1 flex-col">
          <ul className="flex-1">
            {nodes.map((n) => (
              <li key={n.t} className={`flex h-[20px] items-center pl-[20px] ${n.dim ? "text-[#6a6a6a]" : ""}`}>
                <span className="flex w-[14px]">
                  {n.ex && <button aria-label={`Expand ${n.t}`}><svg width="9" height="9" viewBox="0 0 9 9"><path d="M.5.5h8v8h-8zM4.500 2v5M2 4.500h5" fill="none" stroke={G} /></svg></button>}
                </span>
                <Svg n={n.i} map={nodeIcons} vb={16} size={16} />
                <span className="ml-[3px]">{n.t}</span>
              </li>
            ))}
          </ul>
          <div className="flex h-[12px] items-center pr-[5px] pl-[3px]">
            <Left /><span className="mx-[5px] h-[10px] flex-1 rounded-[4px] bg-[#5d5d5d]" /><Right />
          </div>
        </div>
        <div className="flex w-[10px] shrink-0 flex-col items-center pt-[1px] pb-[13px]">
          <span className="rotate-180"><Down s={9} /></span><span className="my-[2px] w-full flex-1 rounded-[4px] bg-[#5d5d5d]" /><Down s={9} />
        </div>
      </div>
      <span className="mx-auto my-[2px] w-[86px] border-t border-dotted border-[#8a8a8a]" />
      <span className="h-[4px]" />
    </aside>
  );
}

/* table top mesh: 80 radial divisions, four concentric edge loops */
const SEG = 80;
const at = (r: number, i: number) => {
  const a = (i * 2 * Math.PI) / SEG;
  return `${(r * Math.sin(a)).toFixed(1)},${(-r * Math.cos(a)).toFixed(1)}`;
};
const segs = Array.from({ length: SEG }, (_, i) => i);
const ring = (r: number) => segs.map((i) => at(r, i)).join(" ");
const gridSteps = Array.from({ length: 25 }, (_, i) => i - 12).filter((i) => i !== 0);

function Scene() {
  return (
    <svg className="absolute inset-0 h-full w-full" viewBox="-979 -539 1959 1078" preserveAspectRatio="xMidYMid slice" role="img" aria-label="Top view of table">
      <defs>
        <linearGradient id="rim" x1="0" y1="0" x2="0" y2="1"><stop offset="0" stopColor="#949494" /><stop offset=".6" stopColor="#838383" /><stop offset="1" stopColor="#6c6c6c" /></linearGradient>
        <linearGradient id="mid" x1="0" y1="0" x2="0" y2="1"><stop offset="0" stopColor="#999999" /><stop offset=".6" stopColor="#8b8b8b" /><stop offset="1" stopColor="#7e7e7e" /></linearGradient>
        <linearGradient id="band" x1="0" y1="0" x2="0" y2="1"><stop offset="0" stopColor="#909090" /><stop offset="1" stopColor="#868686" /></linearGradient>
        <linearGradient id="cap" x1="0" y1="0" x2="0" y2="1"><stop offset="0" stopColor="#a8a8a8" /><stop offset="1" stopColor="#9e9e9e" /></linearGradient>
        <radialGradient id="edge" gradientUnits="userSpaceOnUse" cx="0" cy="0" r="411"><stop offset=".92" stopColor="#000" stopOpacity="0" /><stop offset="1" stopColor="#000" stopOpacity=".22" /></radialGradient>
      </defs>
      <g stroke="#454545" strokeWidth="1" shapeRendering="crispEdges">
        {gridSteps.map((i) => <React.Fragment key={i}><path d={`M${i * 105.250} -600V600`} /><path d={`M-1300 ${i * 105.250}H1300`} /></React.Fragment>)}
        <path d="M0 -600V600M-1300 0H1300" stroke="#3c3c3c" strokeWidth="2" />
      </g>
      <polygon points={ring(411)} fill="url(#rim)" /><polygon points={ring(398)} fill="url(#mid)" />
      <polygon points={ring(374)} fill="url(#band)" /><polygon points={ring(411)} fill="url(#edge)" /><polygon points={ring(354)} fill="url(#cap)" />
      <polygon points={ring(411)} fill="none" stroke="#10103a" strokeWidth="1.500" />
      <g transform="translate(.5 .5)" stroke="#00005c" fill="none" strokeWidth="1" shapeRendering="crispEdges">
        <polygon points={ring(398)} /><polygon points={ring(374)} /><polygon points={ring(354)} />
        {segs.map((i) => <path key={i} d={`M0,0L${at(410, i)}`} />)}
      </g>
    </svg>
  );
}

const hud = [["Verts:", "370"], ["Edges:", "792"], ["Faces:", "432"], ["Tris:", "704"], ["UVs:", "570"]];

function Viewport() {
  return (
    <main className="mt-[3px] mb-[3px] flex min-w-0 flex-1 flex-col border border-[#858585]">
      <Menus label="Panel menu" items={["View", "Shading", "Lighting", "Show", "Renderer", "Panels"]} className="h-[18px] shrink-0 gap-4 pl-2" />
      <div className="flex h-[21px] shrink-0 items-center pb-[2px]">
        <Sep className="w-[9px]" />
        {panelBar.map((n, i) => n === "|" ? <Sep key={i} className="w-[11px]" /> : (
          <button key={i} aria-label={n} className={`flex size-[19px] shrink-0 items-center justify-center ${panelOn.includes(n) ? "bg-[#5285a6]" : ""}`}>
            <Svg n={n} map={panelIcons} vb={18} size={16} />
          </button>
        ))}
        <input aria-label="Exposure" defaultValue="0.00" className="ml-[2px] h-[15px] w-[38px] rounded-[2px] bg-[#2b2b2b] pl-[5px]" />
        <button aria-label="Gamma" className="flex w-[23px] justify-center"><Svg n="gamma" map={panelIcons} vb={18} size={15} /></button>
        <input aria-label="Gamma value" defaultValue="1.00" className="h-[15px] w-[38px] rounded-[2px] bg-[#2b2b2b] pl-[5px]" />
        <button aria-label="View transform" className="mx-[3px] flex h-[18px] w-[18px] items-center justify-center bg-[#5285a6]"><Svg n="on" map={panelIcons} vb={18} size={16} /></button>
        <Select label="Color transform" value="ACES 1.0 SDR-video (sRGB)" className="h-[17px] w-[199px] pl-1" />
      </div>
      <div className="relative min-h-0 flex-1 overflow-hidden bg-[#5c5c5c] font-['Liberation_Sans',sans-serif] font-bold text-white">
        <Scene />
        <table className="relative -mt-[2px] ml-[15px] text-[10px] leading-[20px]">
          <tbody>
            {hud.map(([a, b]) => (
              <tr key={a}><th className="h-[20px] w-[49px] p-0 text-left font-bold">{a}</th><td className="w-[66px] p-0 text-right text-[11px]">{b}</td><td className="w-[65px] p-0 text-right text-[11px]">0</td><td className="w-[65px] p-0 text-right text-[11px]">0</td></tr>
            ))}
          </tbody>
        </table>
        <button className="absolute top-[33px] right-[33px] size-[49px] bg-[#acacac] text-[10px] text-[#66666c]">TOP</button>
        <svg className="absolute bottom-[6px] left-[20px]" width="30" height="30" viewBox="0 0 30 30" aria-hidden="true">
          <path d="M5 10h15" stroke="#e02020" /><path d="M5.500 10v14" stroke="#1010f0" strokeWidth="1.500" />
          <text x="2.500" y="8" fontSize="9" fill="#20e020">y</text><text x="18" y="8" fontSize="9" fill="#e02020">x</text><text x="3" y="24" fontSize="9" fill="#1010f0">z</text>
        </svg>
        <span className="absolute inset-x-0 bottom-[6px] pr-[16px] text-center text-[10px] leading-3">top -Y</span>
      </div>
    </main>
  );
}

const layerBtn: React.ReactNode[] = [
  <path key="a" d="M10 7V4H8l3.500-4L15 4h-2v3z" fill={T} />,
  <path key="b" d="M10 0v4H8l3.500 4L15 4h-2V0z" fill={T} />,
  <path key="c" d="M11 -1v7M7.500 2.500h7" stroke={T} strokeWidth="2" />,
  <circle key="d" cx="11.500" cy="2.500" r="3.500" fill={T} />,
];

function ChannelBox() {
  return (
    <aside aria-label="Channel Box" className="flex w-[284px] shrink-0 border-l-4 border-[#3b3b3b] pl-[3px]">
      <div className="flex min-w-0 flex-1 flex-col">
        <div className="flex h-[23px] shrink-0 items-center justify-end gap-[7px] pr-[6px]">
          <svg width="14" height="14" viewBox="0 0 14 14" aria-hidden="true"><path d="M7 5v4l-4 3M7 9l4 3" fill="none" stroke="#ddd" strokeWidth="1.500" /><path d="M4.500 5h5L7 0z" fill="#7fb341" /><path d="M0 9v5h5z" fill="#5f7fe0" /><path d="M14 9v5H9z" fill="#dd5060" /></svg>
          <svg width="14" height="14" viewBox="0 0 14 14" aria-hidden="true"><path d="M2.500 12A6 6 0 1 1 12 11" fill="none" stroke={T} strokeWidth="3.500" /><path d="M10 9h4l-2 5z" fill="#777" /></svg>
          <svg width="14" height="14" viewBox="0 0 14 14" aria-hidden="true"><path d="M1.500 1v12.500H14" fill="none" stroke="#999" /><path d="M3 11l7-7" stroke={T} strokeWidth="1.800" /><path d="M8 2h5v4H8z" fill={T} /></svg>
        </div>
        <Menus label="Channel menu" items={["Channels", "Edit", "Object", "Show"]} className="h-[20px] shrink-0 gap-[15px] pl-[10px]" />
        <p className="mt-[232px] h-[271px] shrink-0 px-8 text-center leading-[13px] font-semibold">Select objects in the scene to view, edit and set keyframes on channels (attributes)</p>
        <span className="mx-auto w-[86px] border-t border-dotted border-[#9a9a9a]" />
        <div className="mr-[1px] mt-2 mb-[5px] flex min-h-0 flex-1 flex-col border-2 border-[#3a3a3a]">
          <div role="tablist" className="flex h-[17px] shrink-0 bg-[#383838]">
            <button role="tab" aria-selected="true" className="w-[59px] bg-[#444444] text-white">Display</button>
            <button role="tab" aria-selected="false" className="w-[49px] border-r border-l border-[#2f2f2f] text-[#8f8f8f]">Anim</button>
          </div>
          <Menus label="Layer menu" items={["Layers", "Options", "Help"]} className="h-[20px] shrink-0 gap-[15px] pl-[10px]" />
          <div className="flex h-[25px] shrink-0 items-center justify-end gap-[9px] pr-[9px]">
            {layerBtn.map((g, i) => (
              <button key={i} aria-label={`Layer action ${i + 1}`}><svg width="15" height="12" viewBox="0 0 15 12" className="overflow-visible"><path d="M0 7l6-4 6 4-6 4z" fill={G} />{g}</svg></button>
            ))}
          </div>
          <div className="mr-[4px] ml-[2px] min-h-0 flex-1 bg-[#2b2b2b]" />
          <div className="mr-[4px] ml-[2px] flex h-[13px] shrink-0 items-center bg-[#383838] pr-[3px] pl-[3px]">
            <Left /><span className="ml-[5px] h-[10px] w-[154px] rounded-[4px] bg-[#5d5d5d]" /><span className="flex-1" /><Right />
          </div>
        </div>
      </div>
      <div role="tablist" className="flex w-[16px] shrink-0 flex-col bg-[#383838]">
        <button role="tab" aria-selected="true" className="h-[158px] w-full bg-[#444444] leading-[16px] whitespace-nowrap text-white [writing-mode:vertical-rl]">Channel Box / Layer Editor</button>
        <button role="tab" aria-selected="false" className="h-[104px] w-full border-y border-[#2f2f2f] leading-[16px] whitespace-nowrap text-[#8f8f8f] [writing-mode:vertical-rl]">Attribute Editor</button>
        <button role="tab" aria-selected="false" className="h-[110px] w-full border-b border-[#2f2f2f] leading-[16px] whitespace-nowrap text-[#8f8f8f] [writing-mode:vertical-rl]">Modeling Toolkit</button>
      </div>
    </aside>
  );
}

const play: Record<string, React.ReactNode> = {
  "Go to start": <path d="M1 2h2v14H1zM9 3v12L4 9zM15 3v12l-5-6z" fill={G} />,
  "Step back": <path d="M3 2h2v14H3zM13 2v14L6 9z" fill={G} />,
  "Previous key": <g><path d="M14 3v12L7 9z" fill={G} /><path d="M3 0h2.500v18H3z" fill={O} /></g>,
  "Play backwards": <path d="M14 1v16L4 9z" fill={G} />,
  "Play forwards": <path d="M4 1v16l10-8z" fill={G} />,
  "Next key": <g><path d="M4 3v12l7-6z" fill={G} /><path d="M12.500 0H15v18h-2.500z" fill={O} /></g>,
  "Step forward": <path d="M13 2h2v14h-2zM5 2v14l7-7z" fill={G} />,
  "Go to end": <path d="M15 2h2v14h-2zM9 3v12l5-6zM3 3v12l5-6z" fill={G} />,
};
const frames = Array.from({ length: 60 }, (_, i) => (i + 1) * 2);

function TimeSlider() {
  return (
    <section aria-label="Time Slider" className="flex h-[52px] shrink-0 items-center border-t-2 border-b-2 border-[#383838] pl-[3px]">
      <Grip className="h-[38px]" />
      <div className="ml-[8px] flex h-full min-w-0 flex-1">
        <div className="flex w-[8px] flex-col py-2"><span className="flex-1 bg-[#2b2b2b]" /></div>
        <div className="flex w-[19px] flex-col bg-[#5a5a5a] py-2"><span className="flex flex-1 items-end justify-center bg-[#3c3c3c] leading-[19px] text-white">1</span></div>
        {frames.map((f) => (
          <div key={f} className={`flex min-w-0 flex-col border-l border-[#222222] ${f === 120 ? "flex-1" : "flex-[2]"}`}>
            <span className="h-2" />
            <div className="relative -ml-px flex flex-1 flex-col bg-[#2b2b2b] text-[10px] leading-[14px] text-[#a0a0a0]">
              <span className="pl-[7px]">{f}</span>
              <span className="mt-[2px] flex-1 border-l border-[#9a9a9a]" />
            </div>
            <span className="h-2 border-t-2 border-[#666666]" />
          </div>
        ))}
        <div className="flex w-[9px] flex-col py-2"><span className="flex-1 bg-[#2b2b2b]" /></div>
      </div>
      <input aria-label="Current frame" defaultValue="1" className="mr-1 ml-[9px] h-[20px] w-[50px] rounded-[2px] bg-[#2b2b2b] pl-[6px]" />
      {Object.entries(play).map(([n, g]) => (
        <button key={n} aria-label={n} className="flex w-[28px] justify-center"><svg width="17" height="17" viewBox="0 0 18 18">{g}</svg></button>
      ))}
      <span className="w-1" />
    </section>
  );
}

function RangeSlider() {
  return (
    <section aria-label="Range Slider" className="flex h-[37px] shrink-0 items-center pr-[5px] pl-[3px]">
      <Grip className="h-[28px]" />
      <input aria-label="Playback start" defaultValue="1" className="mr-[9px] ml-[9px] h-[20px] w-[50px] rounded-[2px] bg-[#2b2b2b] pl-[6px]" />
      <div className="flex h-[20px] min-w-0 flex-1 rounded-[2px] border-2 border-[#2b2b2b] bg-[#2b2b2b]">
        <div className="flex min-w-0 flex-[87] items-center bg-[#444444]">
          <button aria-label="Range start" className="h-full w-[8px] bg-[#9a9a9a]" />
          <span className="ml-2">1</span>
          <Grip className="mx-auto h-[12px]" />
          <span className="mr-2">120</span>
          <button aria-label="Range end" className="h-full w-[8px] bg-[#9a9a9a]" />
        </div>
        <div className="min-w-0 flex-[57]" />
      </div>
      <input aria-label="Animation end" defaultValue="200" className="ml-[9px] h-[20px] w-[50px] rounded-[2px] bg-[#2b2b2b] pl-[5px]" />
      <Sep className="w-[44px]" />
      <button aria-label="Bookmark" className="flex w-[20px] justify-center"><svg width="14" height="20" viewBox="0 0 14 20" className="overflow-visible"><path d="M1 2h9v17l-4.500-5L1 19z" fill="#e86a3e" /><path d="M10 0v10M6 5h9" stroke={D} strokeWidth="4" /><path d="M10 1v8M6 5h8" stroke={G} strokeWidth="2" /></svg></button>
      <Sep className="w-[42px]" />
      <span className="flex w-[20px] justify-center"><svg width="9" height="8" viewBox="0 0 9 8"><path d="M1 1h7L4.500 6.500z" fill="none" stroke="#8a8a8a" /></svg></span>
      <input aria-label="Character set" readOnly value="No Character Set" className="h-[20px] w-[102px] rounded-[2px] border border-[#3a3a3a] bg-transparent px-1" />
      <span className="flex w-[30px] justify-center pl-2"><svg width="9" height="8" viewBox="0 0 9 8"><path d="M1 1h7L4.500 6.500z" fill="none" stroke="#8a8a8a" /></svg></span>
      <input aria-label="Anim layer" readOnly value="No Anim Layer" className="h-[20px] w-[102px] rounded-[2px] border border-[#3a3a3a] bg-transparent px-1" />
      <Sep className="w-[45px]" />
      <Select label="Frame rate" value="24 fps" className="h-[19px] w-[95px] pl-[3px]" />
      <button aria-label="Loop" className="flex w-[44px] justify-center pl-1"><svg width="18" height="16" viewBox="0 0 18 16"><path d="M13 3.500H5Q2 3.500 2 8v1M5 12.500h8q3 0 3-4.500V7" fill="none" stroke={G} strokeWidth="2" /><path d="M12 0l4 3.500L12 7zM6 9l-4 3.500L6 16z" fill={G} /></svg></button>
      <button aria-label="Cached playback" className="flex size-[23px] items-center justify-center bg-[#5285a6]"><svg width="18" height="18" viewBox="0 0 18 18"><path d="M1 2h16v14H1z" fill="#5b4630" stroke={O} strokeWidth="1.500" /><path d="M2 4h14M2 14h14" stroke={O} strokeWidth="2" strokeDasharray="2 1" /><path d="M4 7h3v4H4zM8 7h3v4H8zM12 7h3v4h-3z" fill="#e8e8e8" /><path d="M11 0l5 3-5 3z" fill="#e8e8e8" /></svg></button>
      <Sep className="w-[40px]" />
      <button aria-label="Sound" className="flex w-[24px] justify-center"><svg width="18" height="16" viewBox="0 0 18 16"><path d="M1 5h4l5-4v14l-5-4H1z" fill={G} /><path d="M12 5q2 3 0 6M14.500 3q3.500 5 0 10" fill="none" stroke={G} strokeWidth="1.500" /></svg></button>
      <button aria-label="Auto key" className="ml-1 flex w-[28px] justify-center"><svg width="16" height="16" viewBox="0 0 16 16"><path d="M13 3a7 7 0 0 0-11 7M3 13a7 7 0 0 0 11-7" fill="none" stroke={G} strokeWidth="1.500" /><path d="M10 4h4V0zM6 12H2v4z" fill={G} /><path d="M8 3v10M5 8h6" stroke={O} strokeWidth="1.500" /><path d="M8 5l2 3-2 3-2-3z" fill={O} /></svg></button>
      <button aria-label="Preferences" className="flex w-[26px] justify-center"><svg width="18" height="18" viewBox="0 0 18 18"><circle cx="5" cy="5" r="3" fill="none" stroke={G} strokeWidth="2" /><circle cx="14" cy="5" r="2" fill={O} /><path d="M7 8l5-1 2 3h3M12 8l-3 4 3 2v4M9 12l-2 4H4" fill="none" stroke={O} strokeWidth="2.200" /></svg></button>
    </section>
  );
}

function CommandLine() {
  return (
    <footer className="flex h-[36px] shrink-0 items-center border-t-2 border-[#383838] pr-[9px] pl-[3px]">
      <Grip className="h-[28px]" />
      <div className="flex w-[1079px] shrink-0 items-center gap-2 pl-2">
        <svg width="16" height="16" viewBox="0 0 16 16" aria-hidden="true"><circle cx="8" cy="8" r="8" fill="#8cb535" /><path d="M5.500 6q0-2.500 2.500-2.500T10.500 6Q10.500 7.500 8 8.800V10M8 11.500v1.800" fill="none" stroke="#2f3a18" strokeWidth="1.800" /></svg>
        <span className="font-['Roboto',sans-serif] text-[10px] text-[#eeeeee]">Polygon Sphere: Create a polygonal sphere on the grid</span>
      </div>
      <span className="mr-[3px] h-full w-[2px] shrink-0 bg-[#383838]" />
      <Grip className="h-[28px]" />
      <label htmlFor="mel" className="mx-2 text-[#eeeeee]">MEL</label>
      <input id="mel" className="h-[20px] w-[542px] rounded-[2px] bg-[#2b2b2b] px-1" />
      <Grip className="h-[14px]" />
      <input aria-label="Result" readOnly className="mr-[9px] h-[20px] min-w-0 flex-1 rounded-[2px] bg-[#2b2b2b] px-1" />
      <button aria-label="Script editor"><svg width="18" height="18" viewBox="0 0 18 18"><path d="M0 0h18v18H0z" fill={G} /><path d="M0 3.500h18M2 1.800h1.500M5 1.800h1.500" stroke="#444" /><text x="9" y="14" textAnchor="middle" fontSize="10" fontWeight="700" fontFamily="Noto Sans, sans-serif" fill="#333">{"{;}"}</text></svg></button>
    </footer>
  );
}

export default function App() {
  return (
    <div className="flex h-screen w-full flex-col overflow-hidden bg-[#444444] font-['Noto_Sans','Open_Sans',sans-serif] text-[11px] leading-none text-[#cccccc]">
      <Header />
      <Shelf />
      <div className="flex min-h-0 flex-1">
        <ToolBox />
        <span className="w-1 shrink-0 bg-[#3b3b3b]" />
        <Outliner />
        <span className="w-[5px] shrink-0 bg-[#3b3b3b]" />
        <Viewport />
        <ChannelBox />
      </div>
      <TimeSlider />
      <RangeSlider />
      <CommandLine />
      <div className="h-[3px] shrink-0 bg-[#2c2c34]"><div className="ml-[492px] h-full w-[48px] bg-[#5d5d66]" /></div>
    </div>
  );
}
